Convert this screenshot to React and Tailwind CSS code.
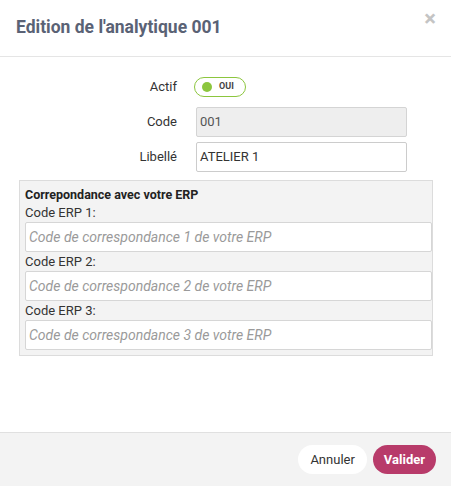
import React from "react";

export default function App() {
  return (
    <div className="w-[451px] h-[486px] bg-white flex flex-col font-['Roboto',sans-serif] text-[#333]">
      <div className="h-[57px] shrink-0 border-b border-[#e5e5e5] flex items-start justify-between pl-[16px] pr-[15px]">
        <h1 className="mt-[15px] text-[17.5px] leading-[24px] font-bold text-[#5a6275]">Edition de l'analytique 001</h1>
        <span className="mt-[7px] text-[22px] leading-[24px] font-bold text-[#c4c4c4]">×</span>
      </div>
      <div className="flex-1 flex flex-col">
        <div className="mt-[20px] grid grid-cols-[177px_211px] gap-x-[19px] gap-y-[5px] text-[13px]">
          <div className="h-[20px] flex items-center justify-end">Actif</div>
          <div className="h-[20px] flex items-center">
            <div className="ml-[-2px] h-[20px] w-[52px] rounded-full border border-[#8cc63e] flex items-center pl-[7px] gap-[7px]">
              <span className="w-[10px] h-[10px] rounded-full bg-[#8cc63e]"></span>
              <span className="text-[9px] font-bold text-[#444]">OUI</span>
            </div>
          </div>
          <div className="h-[30px] mt-[5px] flex items-center justify-end">Code</div>
          <div className="h-[30px] mt-[5px] border border-[#d4d4d4] bg-[#eeeeee] rounded-[2px] flex items-center px-[3px] text-[#555]">001</div>
          <div className="h-[30px] flex items-center justify-end">Libellé</div>
          <div className="h-[30px] border border-[#cccccc] bg-white rounded-[2px] flex items-center px-[3px] text-[#333]">ATELIER 1</div>
        </div>
        <div className="mt-[8px] ml-[19px] mr-[18px] border border-[#dcdcdc] bg-[#f3f3f3] pl-[5px] pr-0 pb-[5px] pt-[6px] text-[13px]">
          <div className="font-bold text-[12.5px] leading-[16px] text-[#222]">Correpondance avec votre ERP</div>
          {[1, 2, 3].map((n) => (
            <div key={n}>
              <div className="leading-[18px] mt-[1px] text-[#333]">Code ERP {n}:</div>
              <div className="h-[30px] bg-white border border-[#d6d6d6] rounded-[2px] flex items-center px-[3px] italic text-[14px] text-[#9a9a9a]">
                Code de correspondance {n} de votre ERP
              </div>
            </div>
          ))}
        </div>
      </div>
      <div className="h-[54px] shrink-0 border-t border-[#e0e0e0] bg-[#f3f3f3] flex items-center justify-end gap-[6px] pr-[15px]">
        <button className="h-[29px] px-[12px] rounded-full bg-white text-[13px] text-[#333]">Annuler</button>
        <button className="h-[29px] px-[11px] rounded-full bg-[#b83b6a] text-[13px] font-bold text-white">Valider</button>
      </div>
    </div>
  );
}
